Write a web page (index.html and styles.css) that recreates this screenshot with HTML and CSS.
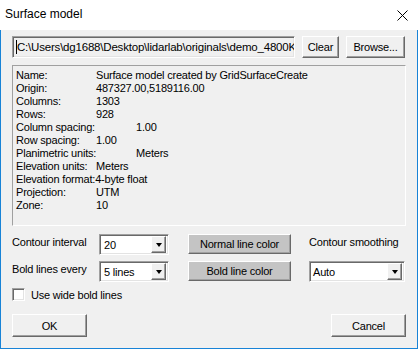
FILE: index.html
```html
<!DOCTYPE html>
<html lang="en">

<head>
	<meta charset="UTF-8">
	<title>Surface model</title>
	<link rel="stylesheet" href="styles.css">
</head>

<body>
	<div class="window">
		<div class="titlebar">
			<span>Surface model</span>
			<svg class="close" width="11" height="11" viewBox="0 0 11 11">
				<path d="M0.5 0.5 L10.5 10.5 M10.5 0.5 L0.5 10.5" stroke="#000" stroke-width="1" fill="none" />
			</svg>
		</div>
		<div class="client">
			<div class="pathrow">
				<div class="path sunken"><span class="caret"></span>C:\Users\dg1688\Desktop\lidarlab\originals\demo_4800K</div>
				<div class="btn clear">Clear</div>
				<div class="btn browse">Browse...</div>
			</div>

			<div class="info">
				<div class="line"><span class="k">Name:</span>Surface model created by GridSurfaceCreate</div>
				<div class="line"><span class="k">Origin:</span>487327.00,5189116.00</div>
				<div class="line"><span class="k">Columns:</span>1303</div>
				<div class="line"><span class="k">Rows:</span>928</div>
				<div class="line"><span class="k wide">Column spacing:</span>1.00</div>
				<div class="line"><span class="k">Row spacing:</span>1.00</div>
				<div class="line"><span class="k wide">Planimetric units:</span>Meters</div>
				<div class="line"><span class="k">Elevation units:</span>Meters</div>
				<div class="line"><span class="k free">Elevation format:</span>4-byte float</div>
				<div class="line"><span class="k">Projection:</span>UTM</div>
				<div class="line"><span class="k">Zone:</span>10</div>
			</div>

			<div class="settings">
				<div class="label">Contour interval</div>
				<div class="combo sunken small"><span>20</span><span class="drop"><i></i></span></div>
				<div class="btn color">Normal line color</div>
				<div class="label">Contour smoothing</div>

				<div class="label">Bold lines every</div>
				<div class="combo sunken small"><span>5 lines</span><span class="drop"><i></i></span></div>
				<div class="btn color">Bold line color</div>
				<div class="combo sunken wide"><span>Auto</span><span class="drop"><i></i></span></div>
			</div>

			<div class="checkrow">
				<span class="check sunken"></span>
				<span>Use wide bold lines</span>
			</div>

			<div class="buttons">
				<div class="btn big">OK</div>
				<div class="btn big">Cancel</div>
			</div>
		</div>
	</div>
</body>

</html>
```

FILE: styles.css
```css
body {
	margin: 0;
	font-family: "Liberation Sans", Arial, sans-serif;
	font-size: 11px;
	letter-spacing: -0.2px;
	color: #000;
	background: #fff;
}

.window {
	width: 418px;
	height: 349px;
	display: flex;
	flex-direction: column;
}

.titlebar {
	height: 30px;
	flex: none;
	background: #fff;
	display: flex;
	align-items: center;
	justify-content: space-between;
	padding: 0 10px 3px 5px;
	box-sizing: border-box;
	font-size: 12px;
	letter-spacing: 0;
}

.close {
	display: block;
	margin-top: 3px;
}

.client {
	flex: 1;
	background: #f0f0f0;
	border: 1px solid #1883d7;
	border-top: 0;
	padding: 6px 11px 0;
}

.sunken {
	box-sizing: border-box;
	border: 1px solid;
	border-color: #a0a0a0 #fff #fff #a0a0a0;
	box-shadow: inset 1px 1px 0 #696969, inset -1px -1px 0 #e3e3e3;
}

.btn {
	box-sizing: border-box;
	background: #f0f0f0;
	border: 1px solid;
	border-color: #fff #696969 #696969 #fff;
	box-shadow: inset -1px -1px 0 #a0a0a0;
	display: flex;
	align-items: center;
	justify-content: center;
}

.pathrow {
	display: flex;
	gap: 7px;
	height: 22px;
}

.path {
	width: 283px;
	padding: 0 2px 0 3px;
	display: flex;
	align-items: center;
	white-space: nowrap;
	overflow: hidden;
	font-size: 11.5px;
}

.caret {
	display: inline-block;
	width: 1px;
	height: 14px;
	background: #000;
	flex: none;
}

.clear {
	width: 37px;
}

.browse {
	width: 59px;
}

.info {
	margin-top: 7px;
	height: 161px;
	box-sizing: border-box;
	border: 1px solid;
	border-color: #a0a0a0 #fff #fff #a0a0a0;
	padding: 3px 3px;
	line-height: 13px;
}

.line {
	white-space: nowrap;
}

.k {
	display: inline-block;
	width: 80px;
}

.k.wide {
	width: 120px;
}

.k.free {
	width: auto;
}

.settings {
	margin-top: 8px;
	display: grid;
	grid-template-columns: 87px 89px 121px 96px;
	grid-template-rows: 21px 21px;
	row-gap: 6px;
}

.label {
	align-self: start;
	padding-top: 2px;
	line-height: 13px;
	white-space: nowrap;
}

.combo {
	background: #fff;
	display: flex;
	align-items: center;
	justify-content: space-between;
	padding: 2px 2px 2px 4px;
}

.combo.small {
	width: 70px;
}

.combo.wide {
	width: 96px;
	padding-left: 3px;
}

.drop {
	width: 15px;
	height: 17px;
	box-sizing: border-box;
	background: #f0f0f0;
	border: 1px solid;
	border-color: #fff #696969 #696969 #fff;
	box-shadow: inset -1px -1px 0 #a0a0a0;
	display: flex;
	align-items: center;
	justify-content: center;
}

.drop i {
	width: 0;
	height: 0;
	border-left: 3.5px solid transparent;
	border-right: 3.5px solid transparent;
	border-top: 4px solid #000;
}

.btn.color {
	width: 103px;
	height: 20px;
	background: #c4c4c4;
}

.checkrow {
	margin-top: 6px;
	display: flex;
	align-items: center;
	gap: 6px;
	height: 13px;
}

.check {
	width: 13px;
	height: 13px;
	background: #fff;
}

.buttons {
	margin-top: 13px;
	display: flex;
	justify-content: space-between;
}

.btn.big {
	width: 75px;
	height: 23px;
}
```
